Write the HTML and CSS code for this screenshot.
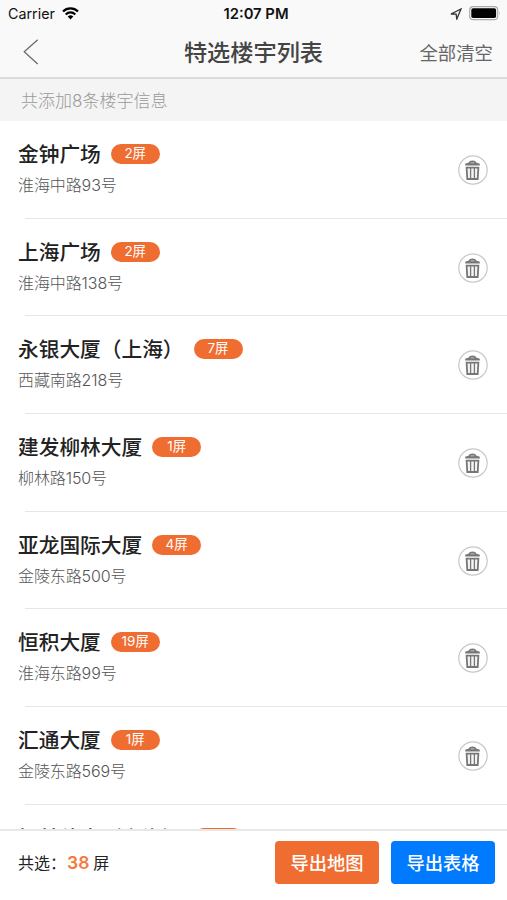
FILE: index.html
```html
<!DOCTYPE html>
<html lang="zh-CN">
<head>
    <meta charset="UTF-8">
    <meta name="viewport" content="width=device-width, initial-scale=1.0">
    <title>特选楼宇列表</title>
    <link rel="stylesheet" href="styles.css">
</head>
<body>
    <!-- shared icons -->
    <svg class="sprite" width="0" height="0">
        <symbol id="icon-trash" viewBox="0 0 30 30">
            <circle cx="15" cy="15" r="14.2" fill="#fff" stroke="#c8c8c8" stroke-width="1.2"/>
            <path d="M10.8 7.6 Q11.2 5.6 14.5 5.6 Q17.8 5.6 18.2 7.6 L21.8 8.8 V10.6 H7.2 V8.8 Z" fill="#777"/>
            <path d="M12.6 7.8 H16.4" stroke="#bbb" stroke-width="1"/>
            <path d="M8.6 12.6 H20.4 L19.7 24 H9.3 Z" fill="#f4f4f4" stroke="#777" stroke-width="1.8"/>
            <path d="M12.6 13 V23.5 M16.4 13 V23.5" fill="none" stroke="#777" stroke-width="1.3"/>
        </symbol>
    </svg>

    <div class="app">
        <header class="header">
            <div class="status-bar">
                <div class="status-left">
                    <span>Carrier</span>
                    <svg class="wifi" width="17" height="13" viewBox="0 0 17 13">
                        <path d="M1 4.5 A10.6 10.6 0 0 1 16 4.5" fill="none" stroke="#000" stroke-width="2.3"/>
                        <path d="M3.7 7.4 A6.8 6.8 0 0 1 13.3 7.4" fill="none" stroke="#000" stroke-width="2.1"/>
                        <path d="M8.5 12.4 L5.7 9.6 A4 4 0 0 1 11.3 9.6 Z" fill="#000"/>
                    </svg>
                </div>
                <div class="status-time">12:07 PM</div>
                <div class="status-right">
                    <svg width="12" height="12" viewBox="0 0 12 12">
                        <path d="M1 6 L11 1 L6.8 11 L6.1 6.2 Z" fill="none" stroke="#333" stroke-width="1.3"/>
                    </svg>
                    <svg class="battery" width="32" height="15" viewBox="0 0 32 15">
                        <rect x="0.7" y="0.7" width="28" height="13" rx="3.5" fill="none" stroke="#aaa" stroke-width="1.2"/>
                        <rect x="2.3" y="2.3" width="24.8" height="9.8" rx="1.8" fill="#000"/>
                        <path d="M30 5 Q31.5 7.2 30 9.4 Z" fill="#aaa"/>
                    </svg>
                </div>
            </div>
            <div class="nav-bar">
                <a class="back">
                    <svg width="16" height="26" viewBox="0 0 16 26">
                        <path d="M14.7 0.8 L1.2 12.8 L14.7 25" fill="none" stroke="#666" stroke-width="1.2"/>
                    </svg>
                </a>
                <h1 class="title">特选楼宇列表</h1>
                <a class="clear">全部清空</a>
            </div>
        </header>

        <div class="summary">共添加8条楼宇信息</div>

        <ul class="list">
            <li class="item">
                <div class="info">
                    <div class="name">金钟广场<span class="badge">2屏</span></div>
                    <div class="address">淮海中路93号</div>
                </div>
                <svg class="trash"><use href="#icon-trash"/></svg>
            </li>
            <li class="item">
                <div class="info">
                    <div class="name">上海广场<span class="badge">2屏</span></div>
                    <div class="address">淮海中路138号</div>
                </div>
                <svg class="trash"><use href="#icon-trash"/></svg>
            </li>
            <li class="item">
                <div class="info">
                    <div class="name">永银大厦（上海）<span class="badge">7屏</span></div>
                    <div class="address">西藏南路218号</div>
                </div>
                <svg class="trash"><use href="#icon-trash"/></svg>
            </li>
            <li class="item">
                <div class="info">
                    <div class="name">建发柳林大厦<span class="badge">1屏</span></div>
                    <div class="address">柳林路150号</div>
                </div>
                <svg class="trash"><use href="#icon-trash"/></svg>
            </li>
            <li class="item">
                <div class="info">
                    <div class="name">亚龙国际大厦<span class="badge">4屏</span></div>
                    <div class="address">金陵东路500号</div>
                </div>
                <svg class="trash"><use href="#icon-trash"/></svg>
            </li>
            <li class="item">
                <div class="info">
                    <div class="name">恒积大厦<span class="badge">19屏</span></div>
                    <div class="address">淮海东路99号</div>
                </div>
                <svg class="trash"><use href="#icon-trash"/></svg>
            </li>
            <li class="item">
                <div class="info">
                    <div class="name">汇通大厦<span class="badge">1屏</span></div>
                    <div class="address">金陵东路569号</div>
                </div>
                <svg class="trash"><use href="#icon-trash"/></svg>
            </li>
            <li class="item">
                <div class="info">
                    <div class="name">恒基佳大（上海）<span class="badge">2屏</span></div>
                </div>
            </li>
        </ul>

        <footer class="footer">
            <div class="total">共选：<span class="count">38</span>屏</div>
            <button class="btn btn-map">导出地图</button>
            <button class="btn btn-table">导出表格</button>
        </footer>
    </div>
</body>
</html>
```
FILE: styles.css
```css
* {
    box-sizing: border-box;
}

body {
    margin: 0;
    font-family: 'Inter', 'Noto Sans CJK SC', sans-serif;
    background-color: #fff;
    color: #222;
}

.sprite {
    display: none;
}

.app {
    display: flex;
    flex-direction: column;
    height: 900px;
    overflow: hidden;
}

/* Header */
.header {
    flex: none;
    height: 79px;
    background-color: #f9f9f9;
    border-bottom: 2px solid #dcdcdc;
}

.status-bar {
    display: grid;
    grid-template-columns: 1fr auto 1fr;
    align-items: center;
    height: 27px;
    padding: 0 6px 0 11px;
    font-size: 14.3px;
    color: #111;
}

.status-left {
    display: flex;
    align-items: center;
    gap: 7px;
    margin-left: -3px;
}

.status-time {
    font-weight: 600;
    font-size: 14.8px;
}

.status-right {
    display: flex;
    align-items: center;
    justify-content: flex-end;
    gap: 7px;
}

.nav-bar {
    display: grid;
    grid-template-columns: 1fr auto 1fr;
    align-items: center;
    height: 50px;
    padding: 0 14px;
}

.back {
    display: flex;
    padding-left: 9px;
}

.title {
    margin: 0;
    font-size: 23.2px;
    font-weight: 500;
    line-height: 30px;
    padding-top: 2px;
    color: #444;
}

.clear {
    font-size: 18.4px;
    text-align: right;
    color: #666;
}

.summary {
    flex: none;
    height: 42px;
    padding-left: 21px;
    background-color: #f4f4f4;
    font-size: 17px;
    font-weight: 300;
    line-height: 44px;
    color: #999;
}

/* Building list */
.list {
    flex: 1;
    min-height: 0;
    margin: 0;
    padding: 0;
    overflow: hidden;
    list-style: none;
}

.item {
    display: flex;
    align-items: center;
    justify-content: space-between;
    height: 97.7px;
    padding: 0 19px 0 18px;
    background: linear-gradient(#e6e6e6, #e6e6e6) 25px 100% / 100% 1px no-repeat;
}

.info {
    height: 62px;
}

.name {
    display: flex;
    align-items: flex-start;
    gap: 10px;
    height: 30px;
    font-size: 20.7px;
    font-weight: 500;
    line-height: 31px;
    white-space: nowrap;
}

.badge {
    width: 49px;
    height: 20px;
    margin-top: 5px;
    border-radius: 10px;
    background-color: #f06d32;
    color: #fff;
    font-size: 13.5px;
    font-weight: 400;
    line-height: 19px;
    text-align: center;
}

.address {
    height: 32px;
    font-size: 16px;
    font-weight: 300;
    line-height: 33px;
    letter-spacing: -0.1px;
    color: #555;
}

.trash {
    width: 30px;
    height: 30px;
}

/* Bottom bar */
.footer {
    display: flex;
    flex: none;
    align-items: center;
    gap: 12px;
    height: 71px;
    padding: 0 12px 7px 18px;
    border-top: 2px solid #e8e8e8;
    background-color: #fff;
}

.total {
    flex: 1;
    font-size: 16px;
}

.count {
    margin: 0 4px 0 1px;
    font-size: 17.5px;
    font-weight: 600;
    color: #f57a3d;
}

.btn {
    width: 104px;
    height: 43px;
    padding: 0;
    border: none;
    border-radius: 4px;
    color: #fff;
    font-family: inherit;
    font-size: 18.3px;
    font-weight: 500;
}

.btn-map {
    background-color: #f06d32;
}

.btn-table {
    background-color: #007aff;
}
```
